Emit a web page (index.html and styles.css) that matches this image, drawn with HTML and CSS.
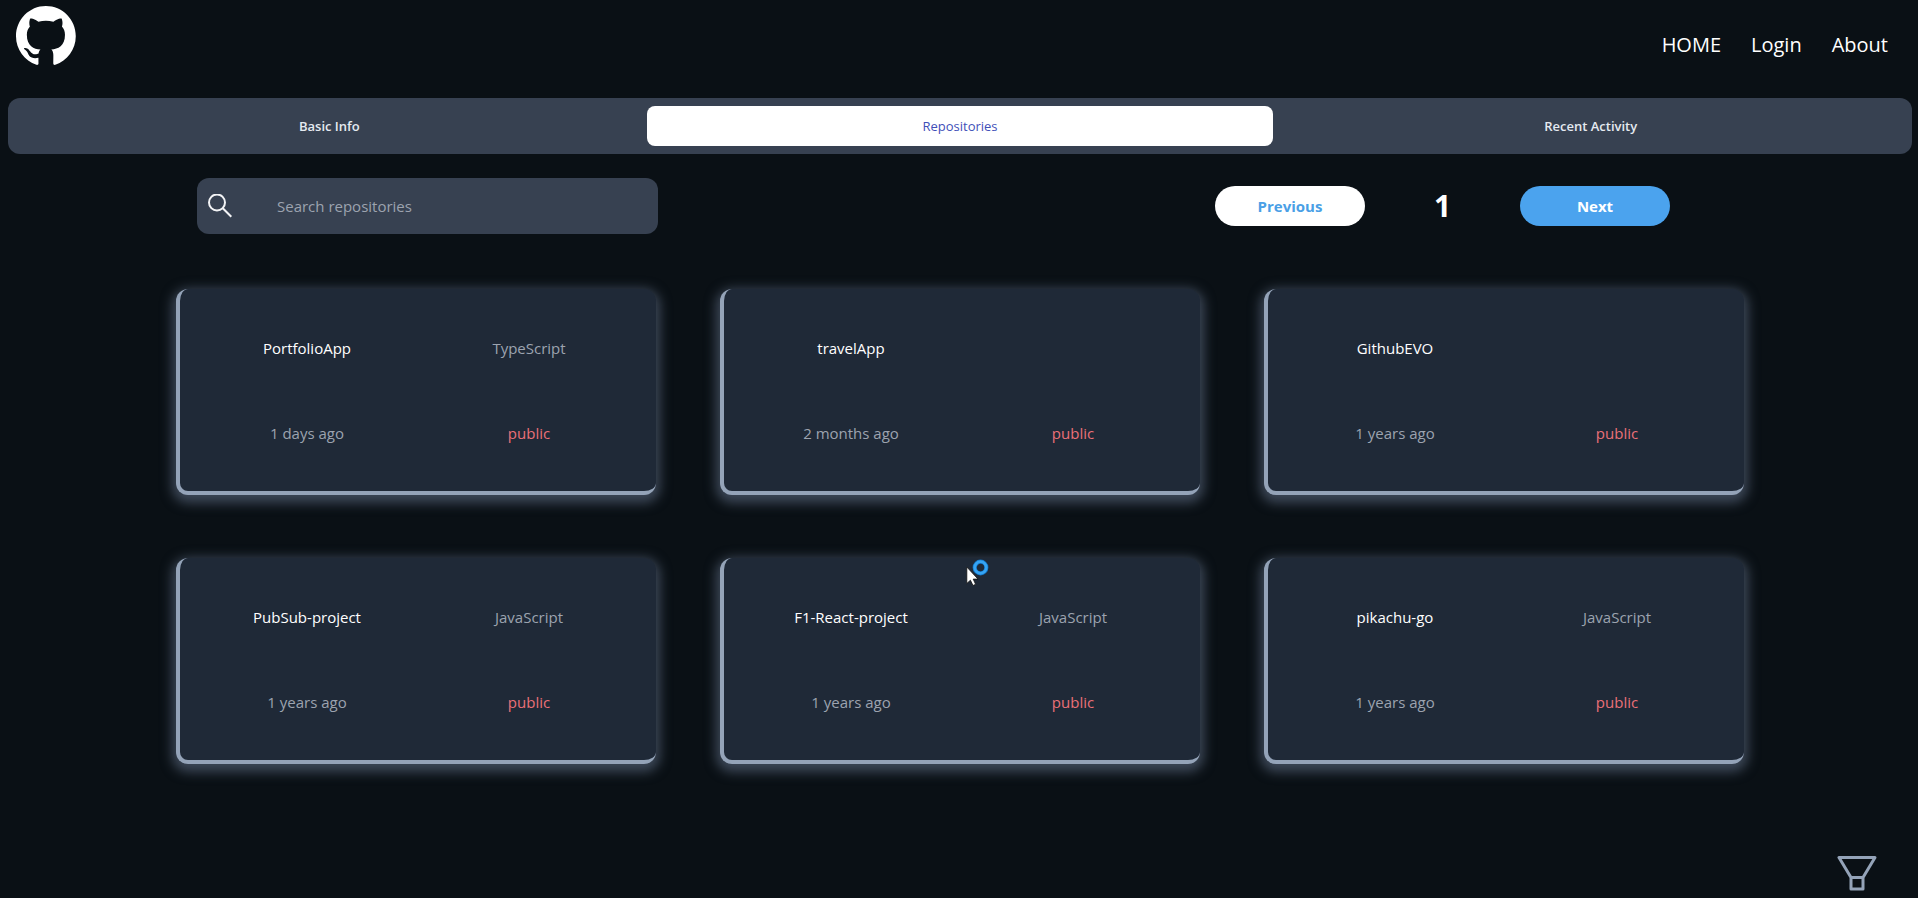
FILE: index.html
```html
<!DOCTYPE html>
<html lang="en">
<head>
<meta charset="utf-8">
<meta name="viewport" content="width=device-width, initial-scale=1">
<title>Repositories</title>
<link rel="stylesheet" href="styles.css">
</head>
<body>
<header class="header">
  <a class="logo" href="#" aria-label="GitHub">
    <svg viewBox="0 0 98 96" width="60" height="59"><path fill="#fff" fill-rule="evenodd" clip-rule="evenodd" d="M48.854 0C21.839 0 0 22 0 49.217c0 21.756 13.993 40.172 33.405 46.69 2.427.49 3.316-1.059 3.316-2.362 0-1.141-.08-5.052-.08-9.127-13.59 2.934-16.42-5.867-16.42-5.867-2.184-5.704-5.42-7.17-5.42-7.17-4.448-3.015.324-3.015.324-3.015 4.934.326 7.523 5.052 7.523 5.052 4.367 7.496 11.404 5.378 14.235 4.074.404-3.178 1.699-5.378 3.074-6.6-10.839-1.141-22.243-5.378-22.243-24.283 0-5.378 1.94-9.778 5.014-13.2-.485-1.222-2.184-6.275.486-13.038 0 0 4.125-1.304 13.426 5.052a46.97 46.97 0 0 1 12.214-1.63c4.125 0 8.33.571 12.213 1.63 9.302-6.356 13.427-5.052 13.427-5.052 2.67 6.763.97 11.816.485 13.038 3.155 3.422 5.015 7.822 5.015 13.2 0 18.905-11.404 23.06-22.324 24.283 1.78 1.548 3.316 4.481 3.316 9.126 0 6.6-.08 11.897-.08 13.526 0 1.304.89 2.853 3.316 2.364 19.412-6.52 33.405-24.935 33.405-46.691C97.707 22 75.788 0 48.854 0z"/></svg>
  </a>
  <nav class="nav">
    <a href="#">HOME</a>
    <a href="#">Login</a>
    <a href="#">About</a>
  </nav>
</header>

<main class="main">
  <div class="tabs" role="tablist">
    <button class="tab" role="tab">Basic Info</button>
    <button class="tab tab-active" role="tab" aria-selected="true">Repositories</button>
    <button class="tab" role="tab">Recent Activity</button>
  </div>

  <div class="toolbar">
    <label class="search">
      <svg class="search-icon" viewBox="0 0 24 24" width="24" height="24" fill="none" stroke="#f3f4f6" stroke-width="2"><circle cx="9" cy="8.500" r="8"/><path d="M14.800 14.300L23.300 22.800"/></svg>
      <input class="search-input" type="text" placeholder="Search repositories" aria-label="Search repositories">
    </label>
    <div class="pager">
      <button class="page-btn">Previous</button>
      <span class="page-number">1</span>
      <button class="page-btn page-btn-next">Next</button>
    </div>
  </div>

  <section class="repos">
    <article class="card"><a class="name" href="#">PortfolioApp</a><span>TypeScript</span><span>1 days ago</span><span class="public">public</span></article>
    <article class="card"><a class="name" href="#">travelApp</a><span></span><span>2 months ago</span><span class="public">public</span></article>
    <article class="card"><a class="name" href="#">GithubEVO</a><span></span><span>1 years ago</span><span class="public">public</span></article>
    <article class="card"><a class="name" href="#">PubSub-project</a><span>JavaScript</span><span>1 years ago</span><span class="public">public</span></article>
    <article class="card"><a class="name" href="#">F1-React-project</a><span>JavaScript</span><span>1 years ago</span><span class="public">public</span></article>
    <article class="card"><a class="name" href="#">pikachu-go</a><span>JavaScript</span><span>1 years ago</span><span class="public">public</span></article>
  </section>
</main>

<button class="filter" aria-label="Filter">
  <svg viewBox="0 0 40 36" width="40" height="36" fill="none" stroke="#94a3b8" stroke-width="3" stroke-linejoin="round"><path d="M2 2.500H38L26 22.500V34H14V22.500Z"/><path d="M14 22.500H26"/></svg>
</button>

<svg class="pointer" viewBox="0 0 24 30" width="24" height="30" aria-hidden="true">
  <circle cx="14.500" cy="8.500" r="5.800" fill="none" stroke="#1273c4" stroke-width="4.200"/>
  <circle cx="14.500" cy="8.500" r="5.800" fill="none" stroke="#35a4f4" stroke-width="2.800"/>
  <path fill="#fff" stroke="#111" stroke-width=".8" d="M.8 8V24.500L4.400 21.200L7 26.500L9.600 25.300L7.200 20.100H12Z"/>
</svg>
</body>
</html>
```
FILE: styles.css
```css
* {
  box-sizing: border-box;
}

body {
  position: relative;
  margin: 0;
  min-height: 100vh;
  padding: 0 6px 0 8px;
  background: #0a1015;
  color: #9ca3af;
  font-family: "Segoe UI", "Open Sans", "Noto Sans", sans-serif;
  font-size: 15px;
  line-height: 24px;
}

a {
  color: #fff;
  text-decoration: none;
}

button,
input {
  border: 0;
  font: inherit;
}

button {
  cursor: pointer;
}

.header {
  display: flex;
  justify-content: space-between;
  align-items: center;
  height: 90px;
  padding: 0 24px 0 8px;
}

.logo {
  align-self: flex-start;
  padding-top: 6px;
}

.logo svg {
  display: block;
}

.nav {
  display: flex;
  gap: 30px;
  font-size: 20px;
}

.tabs {
  display: flex;
  gap: 4px;
  margin-top: 8px;
  padding: 8px;
  border-radius: 12px;
  background: #374151;
}

.tab {
  flex: 1;
  height: 40px;
  border-radius: 8px;
  background: none;
  color: #e5eaf0;
  font-size: 13px;
  font-weight: 600;
}

.tab-active {
  background: #fff;
  color: #3f4fb8;
  font-weight: 500;
}

.toolbar {
  display: flex;
  justify-content: space-between;
  align-items: center;
  margin: 24px 242px 0 189px;
}

.search {
  display: flex;
  align-items: center;
  width: 461px;
  height: 56px;
  padding: 0 11px;
  border-radius: 12px;
  background: #374151;
}

.search-icon {
  flex: none;
}

.search-input {
  flex: 1;
  min-width: 0;
  margin-left: 45px;
  padding: 0;
  background: none;
  color: #fff;
  outline: 0;
}

.search-input::placeholder {
  color: #9ca3af;
}

.pager {
  display: flex;
  justify-content: space-between;
  align-items: center;
  width: 455px;
}

.page-btn {
  width: 150px;
  height: 40px;
  border-radius: 20px;
  background: #fff;
  color: #4a9fe6;
  font-weight: 700;
}

.page-btn-next {
  background: #4ba3ee;
  color: #fff;
}

.page-number {
  color: #fff;
  font-size: 30px;
  font-weight: 700;
}

.repos {
  display: grid;
  grid-template-columns: repeat(3, 1fr);
  gap: 63px 64px;
  margin: 55px 168px 0;
}

.card {
  display: grid;
  grid-template-columns: 1fr 1fr;
  grid-auto-rows: 1fr;
  place-items: center;
  height: 206px;
  padding: 16px;
  border-left: 4px solid #94a3b8;
  border-bottom: 4px solid #94a3b8;
  border-radius: 12px;
  background: #1f2937;
  box-shadow: 0 4px 12px 4px #3d4858;
}

.public {
  color: #ea7078;
}

.filter {
  position: fixed;
  right: 41px;
  bottom: 7px;
  padding: 0;
  background: none;
}

.filter svg {
  display: block;
}

.pointer {
  position: absolute;
  left: 966px;
  top: 559px;
}
```
